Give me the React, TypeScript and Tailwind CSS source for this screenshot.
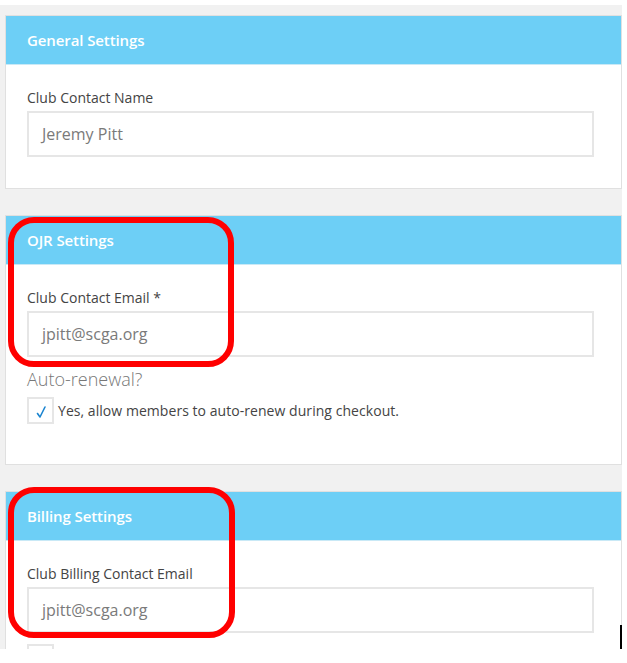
const font = { fontFamily: '"Open Sans", "Noto Sans", sans-serif' };

const Header = ({ title }: { title: string }) => (
  <div className="h-[49px] bg-[#6dcff6] border-b border-[#c9e9f6] flex items-center pl-[21px] pt-[1px]">
    <span className="text-white font-semibold text-[15px] tracking-[-0.1px]">{title}</span>
  </div>
);

const Field = ({ label, value }: { label: string; value: string }) => (
  <>
    <div className="text-[14px] leading-[20px] text-[#444]">{label}</div>
    <div className="mt-[3px] w-[567px] h-[46px] border-2 border-[#e6e6e6] bg-white flex items-center pl-[13px]">
      <span className="text-[16px] text-[#7a7a7a]">{value}</span>
    </div>
  </>
);

const Box = ({ checked }: { checked?: boolean }) => (
  <div className="w-[27px] h-[27px] border-2 border-[#e6e6e6] bg-white flex items-center justify-center shrink-0">
    {checked && (
      <svg width="12" height="14" viewBox="0 0 12 14" className="mt-[3px]">
        <path d="M2.5 8.5 L5 12 L10 2" fill="none" stroke="#1b85d0" strokeWidth="1.6" strokeLinecap="round" strokeLinejoin="round" />
      </svg>
    )}
  </div>
);

export default function App() {
  return (
    <div className="relative w-[627px] h-[663px] bg-white overflow-hidden" style={font}>
      <div className="mt-[5px] w-[622px] h-[644px] bg-[#f1f1f1] overflow-hidden pl-[5px] pt-[10px] flex flex-col gap-[26px]">
        {/* General */}
        <div className="bg-white border border-[#e0e0e0] shrink-0">
          <Header title="General Settings" />
          <div className="pl-[21px] pt-[23px] pb-[31px]">
            <Field label="Club Contact Name" value="Jeremy Pitt" />
          </div>
        </div>

        {/* OJR */}
        <div className="bg-white border border-[#e0e0e0] shrink-0">
          <Header title="OJR Settings" />
          <div className="pl-[21px] pt-[23px] pb-[40px]">
            <Field label="Club Contact Email *" value="jpitt@scga.org" />
            <div className="mt-[10px] text-[18px] leading-[24px] font-light text-[#777]">Auto-renewal?</div>
            <div className="mt-[6px] flex items-center gap-[4px]">
              <Box checked />
              <span className="text-[14px] text-[#444] tracking-[0.05px]">
                Yes, allow members to auto-renew during checkout.
              </span>
            </div>
          </div>
        </div>

        {/* Billing */}
        <div className="bg-white border border-[#e0e0e0] shrink-0">
          <Header title="Billing Settings" />
          <div className="pl-[21px] pt-[23px] pb-[20px]">
            <Field label="Club Billing Contact Email" value="jpitt@scga.org" />
            <div className="mt-[11px]">
              <Box />
            </div>
          </div>
        </div>
      </div>

      {/* annotations */}
      <div className="absolute left-[8px] top-[217px] w-[226px] h-[150px] border-[6px] border-[#ff0000] rounded-[26px]" />
      <div className="absolute left-[8px] top-[487px] w-[227px] h-[151px] border-[6px] border-[#ff0000] rounded-[26px]" />
      <div className="absolute left-[620px] top-[625px] w-[2px] h-[24px] bg-black" />
    </div>
  );
}
